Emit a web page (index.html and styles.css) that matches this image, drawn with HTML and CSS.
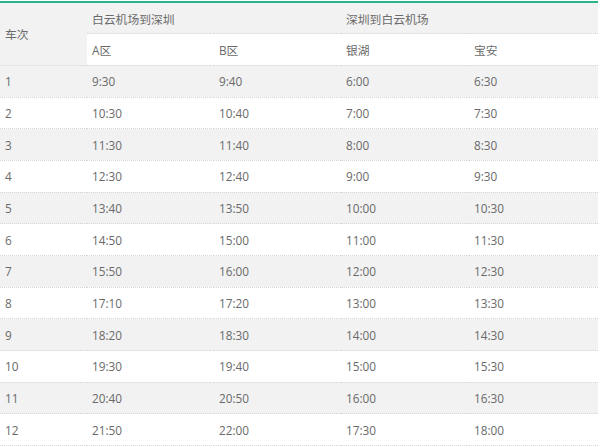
FILE: index.html
```html
<!DOCTYPE html>
<html lang="zh-CN">
<head>
<meta charset="utf-8">
<title>机场巴士时刻表</title>
<link rel="stylesheet" href="styles.css">
</head>
<body>
<table class="schedule">
  <colgroup>
    <col class="c-no">
    <col class="c-a">
    <col class="c-b">
    <col class="c-c">
    <col class="c-d">
  </colgroup>
  <thead>
    <tr class="head-top">
      <th rowspan="2" class="no-head">车次</th>
      <th colspan="2" class="group group-1">白云机场到深圳</th>
      <th colspan="2" class="group group-2">深圳到白云机场</th>
    </tr>
    <tr class="head-sub">
      <th>A区</th>
      <th>B区</th>
      <th>银湖</th>
      <th>宝安</th>
    </tr>
  </thead>
  <tbody>
    <tr><td>1</td><td>9:30</td><td>9:40</td><td>6:00</td><td>6:30</td></tr>
    <tr><td>2</td><td>10:30</td><td>10:40</td><td>7:00</td><td>7:30</td></tr>
    <tr><td>3</td><td>11:30</td><td>11:40</td><td>8:00</td><td>8:30</td></tr>
    <tr><td>4</td><td>12:30</td><td>12:40</td><td>9:00</td><td>9:30</td></tr>
    <tr><td>5</td><td>13:40</td><td>13:50</td><td>10:00</td><td>10:30</td></tr>
    <tr><td>6</td><td>14:50</td><td>15:00</td><td>11:00</td><td>11:30</td></tr>
    <tr><td>7</td><td>15:50</td><td>16:00</td><td>12:00</td><td>12:30</td></tr>
    <tr><td>8</td><td>17:10</td><td>17:20</td><td>13:00</td><td>13:30</td></tr>
    <tr><td>9</td><td>18:20</td><td>18:30</td><td>14:00</td><td>14:30</td></tr>
    <tr><td>10</td><td>19:30</td><td>19:40</td><td>15:00</td><td>15:30</td></tr>
    <tr><td>11</td><td>20:40</td><td>20:50</td><td>16:00</td><td>16:30</td></tr>
    <tr><td>12</td><td>21:50</td><td>22:00</td><td>17:30</td><td>18:00</td></tr>
  </tbody>
</table>
</body>
</html>
```
FILE: styles.css
```css
html, body {
  margin: 0;
  padding: 0;
  background: #ffffff;
}

body {
  padding-top: 1px;
  font-family: "Open Sans", "Noto Sans CJK SC", sans-serif;
  font-size: 11.8px;
  color: #6a6a6a;
}

.schedule {
  width: 598px;
  border-collapse: collapse;
  table-layout: fixed;
  border-top: 2px solid #2bb48c;
}

.c-no { width: 87px; }
.c-a { width: 127px; }
.c-b { width: 127px; }
.c-c { width: 128px; }
.c-d { width: 129px; }

.schedule th,
.schedule td {
  padding: 0 5px;
  text-align: left;
  font-weight: normal;
  white-space: nowrap;
  border-bottom: 1px dotted #d6d6d6;
}

.schedule tr {
  height: 31.7px;
}

.head-top th {
  background: #f2f2f2;
}

.no-head {
  background: #f2f2f2;
}

.group-1 {
  border-bottom: 1px solid #d9d9d9;
}

.head-sub th {
  background: #ffffff;
}

.schedule tbody tr:nth-child(odd) td {
  background: #f2f2f2;
}

.schedule tbody tr:nth-child(even) td {
  background: #ffffff;
}
```
